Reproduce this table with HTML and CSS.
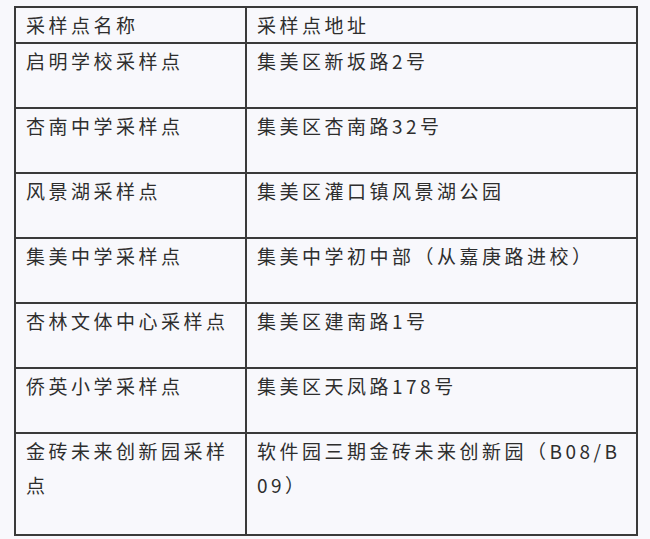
FILE: index.html
```html
<!DOCTYPE html>
<html lang="zh">
<head>
<meta charset="utf-8">
<link rel="stylesheet" href="styles.css">
</head>
<body>
<table class="sites">
  <colgroup><col class="c-name"><col class="c-addr"></colgroup>
  <thead>
    <tr><th>采样点名称</th><th>采样点地址</th></tr>
  </thead>
  <tbody>
    <tr><td>启明学校采样点</td><td>集美区新坂路2号</td></tr>
    <tr><td>杏南中学采样点</td><td>集美区杏南路32号</td></tr>
    <tr><td>风景湖采样点</td><td>集美区灌口镇风景湖公园</td></tr>
    <tr><td>集美中学采样点</td><td>集美中学初中部（从嘉庚路进校）</td></tr>
    <tr><td>杏林文体中心采样点</td><td>集美区建南路1号</td></tr>
    <tr><td>侨英小学采样点</td><td>集美区天凤路178号</td></tr>
    <tr class="last"><td>金砖未来创新园采样点</td><td>软件园三期金砖未来创新园（B08/B09）</td></tr>
  </tbody>
</table>
</body>
</html>
```

FILE: styles.css
```css
html, body {
  margin: 0;
  padding: 0;
  background: #f8f8fc;
}
body {
  padding: 6px 0 0 14px;
  font-family: "Noto Sans CJK SC", "Noto Sans", sans-serif;
  color: #2e2e2e;
}
.sites {
  border-collapse: collapse;
  width: 624px;
  table-layout: fixed;
}
.c-name { width: 231px; }
.sites th,
.sites td {
  border: 2px solid #3a3a3a;
  font-size: 19px;
  font-weight: 400;
  line-height: 34px;
  letter-spacing: 3.5px;
  text-align: left;
  vertical-align: top;
  padding: 0 8px 0 10px;
  word-break: break-all;
}
.sites td {
  padding-bottom: 29px;
}
.sites .last td {
  padding-bottom: 32px;
}
```
